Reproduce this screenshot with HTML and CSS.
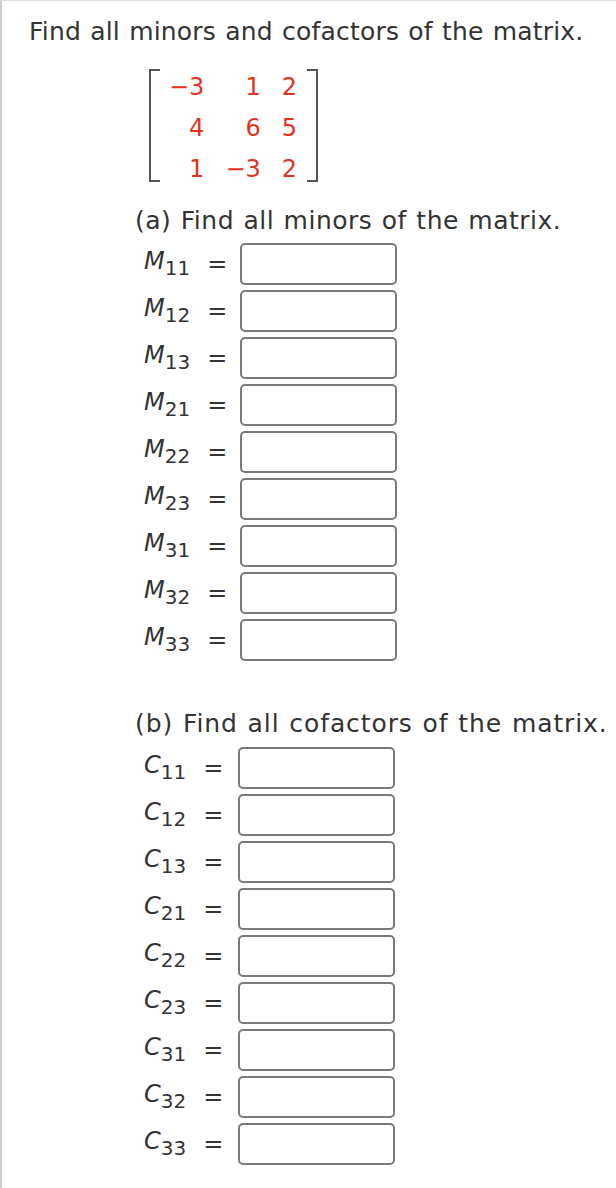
FILE: index.html
```html
<!DOCTYPE html>
<html>
<head>
<meta charset="utf-8">
<link rel="stylesheet" href="styles.css">
</head>
<body>
<div class="page">
  <p class="title">Find all minors and cofactors of the matrix.</p>
  <div class="matrix">
    <span class="bracket left"></span>
    <div class="cells">
      <span>−3</span><span>1</span><span>2</span>
      <span>4</span><span>6</span><span>5</span>
      <span>1</span><span>−3</span><span>2</span>
    </div>
    <span class="bracket right"></span>
  </div>

  <p class="heading head-a">(a) Find all minors of the matrix.</p>
  <div class="rows rows-a">
    <div class="row"><span class="lab"><i>M</i><span class="sub">11</span></span><span class="eq">=</span><span class="box"></span></div>
    <div class="row"><span class="lab"><i>M</i><span class="sub">12</span></span><span class="eq">=</span><span class="box"></span></div>
    <div class="row"><span class="lab"><i>M</i><span class="sub">13</span></span><span class="eq">=</span><span class="box"></span></div>
    <div class="row"><span class="lab"><i>M</i><span class="sub">21</span></span><span class="eq">=</span><span class="box"></span></div>
    <div class="row"><span class="lab"><i>M</i><span class="sub">22</span></span><span class="eq">=</span><span class="box"></span></div>
    <div class="row"><span class="lab"><i>M</i><span class="sub">23</span></span><span class="eq">=</span><span class="box"></span></div>
    <div class="row"><span class="lab"><i>M</i><span class="sub">31</span></span><span class="eq">=</span><span class="box"></span></div>
    <div class="row"><span class="lab"><i>M</i><span class="sub">32</span></span><span class="eq">=</span><span class="box"></span></div>
    <div class="row"><span class="lab"><i>M</i><span class="sub">33</span></span><span class="eq">=</span><span class="box"></span></div>
  </div>

  <p class="heading head-b">(b) Find all cofactors of the matrix.</p>
  <div class="rows rows-b">
    <div class="row"><span class="lab"><i>C</i><span class="sub">11</span></span><span class="eq">=</span><span class="box"></span></div>
    <div class="row"><span class="lab"><i>C</i><span class="sub">12</span></span><span class="eq">=</span><span class="box"></span></div>
    <div class="row"><span class="lab"><i>C</i><span class="sub">13</span></span><span class="eq">=</span><span class="box"></span></div>
    <div class="row"><span class="lab"><i>C</i><span class="sub">21</span></span><span class="eq">=</span><span class="box"></span></div>
    <div class="row"><span class="lab"><i>C</i><span class="sub">22</span></span><span class="eq">=</span><span class="box"></span></div>
    <div class="row"><span class="lab"><i>C</i><span class="sub">23</span></span><span class="eq">=</span><span class="box"></span></div>
    <div class="row"><span class="lab"><i>C</i><span class="sub">31</span></span><span class="eq">=</span><span class="box"></span></div>
    <div class="row"><span class="lab"><i>C</i><span class="sub">32</span></span><span class="eq">=</span><span class="box"></span></div>
    <div class="row"><span class="lab"><i>C</i><span class="sub">33</span></span><span class="eq">=</span><span class="box"></span></div>
  </div>
</div>
</body>
</html>
```

FILE: styles.css
```css
html, body {
  margin: 0;
  padding: 0;
  background: #ffffff;
}

.page {
  box-sizing: border-box;
  min-height: 1188px;
  border-top: 1px solid #dcdcdc;
  border-left: 2px solid #cccccc;
  padding: 16px 0 0 27px;
  font-family: "DejaVu Sans", Verdana, sans-serif;
  color: #333333;
}

.title {
  margin: 0;
  font-size: 25px;
  line-height: 30px;
  letter-spacing: 0.2px;
  word-spacing: 1px;
  white-space: nowrap;
}

.matrix {
  display: flex;
  align-items: flex-start;
  margin: 20px 0 0 120px;
}

.bracket {
  box-sizing: border-box;
  width: 11px;
  height: 113px;
  margin-top: 2px;
  border: 2px solid #555555;
}

.bracket.left {
  border-right: none;
}

.bracket.right {
  border-left: none;
}

.cells {
  display: grid;
  grid-template-columns: auto auto auto;
  grid-auto-rows: 41px;
  column-gap: 21px;
  padding: 0 10px 0 9px;
  font-size: 24px;
  line-height: 41px;
  color: #e3321f;
  text-align: right;
}

.heading {
  margin: 16px 0 0 106px;
  font-size: 25px;
  line-height: 30px;
  letter-spacing: 0.5px;
  word-spacing: 1px;
  white-space: nowrap;
}

.head-b {
  margin-top: 48px;
  letter-spacing: 0.9px;
}

.rows {
  display: flex;
  flex-direction: column;
  gap: 5px;
  margin: 7px 0 0 115px;
}

.rows-b {
  margin-top: 8px;
}

.row {
  display: flex;
  align-items: center;
  height: 42px;
}

.lab {
  font-size: 24px;
  line-height: 30px;
  white-space: nowrap;
}

.lab i {
  font-style: italic;
}

.sub {
  font-size: 20px;
  vertical-align: -6px;
}

.eq {
  margin-left: 17px;
  font-size: 24px;
  line-height: 30px;
}

.box {
  box-sizing: border-box;
  width: 157px;
  height: 42px;
  margin-left: 13px;
  border: 2px solid #7a7a7a;
  border-radius: 5px;
  background: #ffffff;
}

.rows-b .box {
  margin-left: 15px;
}
```
